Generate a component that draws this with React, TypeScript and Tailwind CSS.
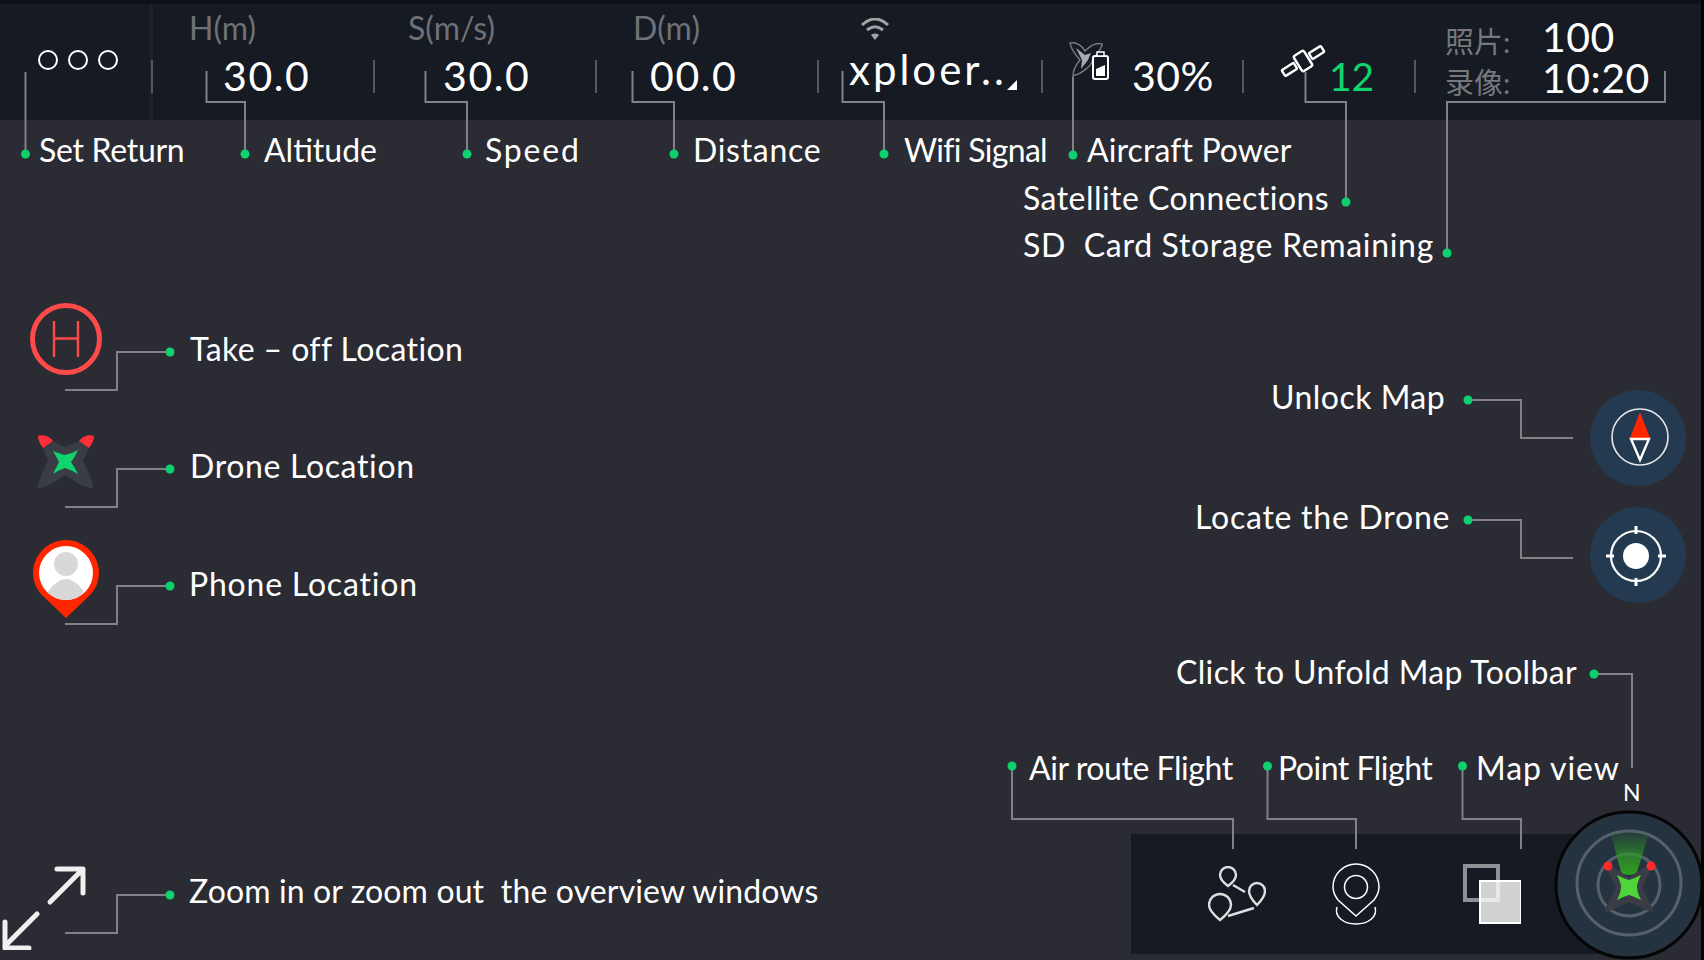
const leaders = [
  { points: '25.5,72 25.5,154', dot: [25.5, 154] },
  { points: '206.5,71 206.5,102 245,102 245,154', dot: [245, 154] },
  { points: '425.5,71 425.5,102 467,102 467,154', dot: [467, 154] },
  { points: '632.5,71 632.5,102 674,102 674,154', dot: [674, 154] },
  { points: '842.5,71 842.5,102 884,102 884,154', dot: [884, 154] },
  { points: '1073,77 1073,155', dot: [1073, 155] },
  { points: '1305.5,72 1305.5,102 1346,102 1346,202', dot: [1346, 202] },
  { points: '1665,71 1665,102 1447,102 1447,253', dot: [1447, 253] },
  { points: '65,390 117,390 117,352 170,352', dot: [170, 352] },
  { points: '65,507 117,507 117,469 170,469', dot: [170, 469] },
  { points: '65,624 117,624 117,586 170,586', dot: [170, 586] },
  { points: '65,933 117,933 117,895 170,895', dot: [170, 895] },
  { points: '1468,400 1521,400 1521,438 1573,438', dot: [1468, 400] },
  { points: '1468,520 1521,520 1521,558 1573,558', dot: [1468, 520] },
  { points: '1594,674 1632,674 1632,768', dot: [1594, 674] },
  { points: '1012,766 1012,819 1233,819 1233,849', dot: [1012, 766] },
  { points: '1267.5,766 1267.5,819 1356,819 1356,849', dot: [1267.5, 766] },
  { points: '1462.5,766 1462.5,819 1521,819 1521,849', dot: [1462.5, 766] },
];

const labels = [
  { text: 'Set Return', className: 'left-[39px] top-[135px] tracking-[-0.3px]' },
  { text: 'Altitude', className: 'left-[264px] top-[135px]' },
  { text: 'Speed', className: 'left-[485px] top-[135px] tracking-[1.8px]' },
  { text: 'Distance', className: 'left-[693px] top-[135px] tracking-[0.7px]' },
  { text: 'Wifi Signal', className: 'left-[904px] top-[135px] tracking-[-0.7px]' },
  { text: 'Aircraft Power', className: 'left-[1087px] top-[135px] tracking-[0.1px]' },
  { text: 'Satellite Connections', className: 'left-[1023px] top-[183px] tracking-[0.46px]' },
  { text: 'SD  Card Storage Remaining', className: 'left-[1023px] top-[230px] tracking-[0.68px]' },
  { text: 'Take – off Location', className: 'left-[190px] top-[334px] tracking-[0.4px]' },
  { text: 'Drone Location', className: 'left-[190px] top-[451px] tracking-[0.65px]' },
  { text: 'Phone Location', className: 'left-[189px] top-[569px] tracking-[0.8px]' },
  { text: 'Zoom in or zoom out  the overview windows', className: 'left-[189px] top-[876px] tracking-[0.13px]' },
  { text: 'Unlock Map', className: 'left-[1271px] top-[382px] tracking-[0.47px]' },
  { text: 'Locate the Drone', className: 'left-[1195px] top-[502px] tracking-[0.75px]' },
  { text: 'Click to Unfold Map Toolbar', className: 'left-[1176px] top-[657px] tracking-[0.34px]' },
  { text: 'Air route Flight', className: 'left-[1029px] top-[753px] tracking-[-0.43px]' },
  { text: 'Point Flight', className: 'left-[1278px] top-[753px] tracking-[-0.5px]' },
  { text: 'Map view', className: 'left-[1476px] top-[753px] tracking-[0.9px]' },
];

function Tick() {
  return <div className="mt-[56px] h-[33px] w-[2px] shrink-0 bg-[#55585e]" />;
}

function Stat({ label, value, labelClass, valueClass }: { label: string; value: string; labelClass: string; valueClass: string }) {
  return (
    <div className="w-[220px] shrink-0">
      <div className={`mt-[6px] text-[32px] leading-[36px] text-[#6e7176] ${labelClass}`}>{label}</div>
      <div className={`mt-[7px] text-[41px] leading-[46px] tracking-[1.6px] text-white ${valueClass}`}>{value}</div>
    </div>
  );
}

function WifiIcon() {
  return (
    <svg width="30" height="22" viewBox="0 0 30 22" fill="none">
      <path d="M2 7C10 -1 20 -1 28 7" stroke="#a3a3a3" strokeWidth="3" />
      <path d="M7 12C12 8 18 8 23 12" stroke="#a3a3a3" strokeWidth="3" />
      <path d="M11 17C13 15 17 15 19 17L15 22Z" fill="#a3a3a3" />
    </svg>
  );
}

function BatteryDrone() {
  return (
    <svg width="42" height="40" viewBox="0 0 42 40" fill="none">
      <path d="M1 1C8 0 13 4 16 9C21 4 27 0 33 2C33 7 28 12 24 17C23 24 12 32 4 34C4 26 8 22 11 18C7 13 2 8 1 1Z" stroke="#77797e" strokeWidth="1.5" />
      <path d="M7 6L16 13L22 11L19 18L12 27L13 18Z" fill="#a8a9ac" />
      <rect x="24" y="14" width="15" height="23" rx="2" fill="#151a23" stroke="#fff" strokeWidth="2" />
      <rect x="28" y="10" width="7" height="4" fill="#151a23" stroke="#fff" strokeWidth="1.5" />
      <path d="M27 34V27L36 23V34Z" fill="#fff" />
    </svg>
  );
}

function SatelliteIcon() {
  return (
    <svg width="46" height="34" viewBox="0 0 46 34" fill="none" stroke="#fff" strokeWidth="2.4">
      <g transform="rotate(-32 23 17)">
        <rect x="17" y="8" width="12" height="18" rx="2" />
        <rect x="0" y="13.5" width="14" height="7" rx="1" />
        <rect x="32" y="13.5" width="14" height="7" rx="1" />
      </g>
    </svg>
  );
}

function HelipadIcon() {
  return (
    <svg width="72" height="72" viewBox="0 0 72 72" fill="none" stroke="#ff4a4a">
      <circle cx="36" cy="36" r="33.5" strokeWidth="5" />
      <path d="M24 18V54M48 18V54M24 35.5H48" strokeWidth="2.4" />
    </svg>
  );
}

function DroneIcon() {
  return (
    <svg width="60" height="56" viewBox="0 0 60 56">
      <path d="M7 15L17 8L29 14L43 8L53 15L47 28C52 38 57 48 57 55C50 56 38 48 29 42C20 48 8 56 2 55C2 48 7 38 12 28Z" fill="#3a3c46" />
      <path d="M2 3C8 1 14 4 17 8L7 15C4 11 2 7 2 3Z" fill="#ff2f36" />
      <path d="M58 3C52 1 46 4 43 8L53 15C56 11 58 7 58 3Z" fill="#ff2f36" />
      <path d="M17 18Q25 21 29 22Q35 21 42 17Q39 24 35 29Q39 35 42 41Q35 37 29 35Q23 37 17 41Q20 35 23 29Q20 23 17 18Z" fill="#10d56f" />
    </svg>
  );
}

function PhonePin() {
  return (
    <svg width="66" height="78" viewBox="0 0 66 78">
      <defs>
        <clipPath id="pin-face">
          <circle cx="33" cy="33" r="27" />
        </clipPath>
      </defs>
      <path d="M33 0C51 0 66 15 66 33C66 42 62 50 56 56L33 78L10 56C4 50 0 42 0 33C0 15 15 0 33 0Z" fill="#ff2600" />
      <circle cx="33" cy="33" r="27" fill="#fff" />
      <circle cx="33" cy="24" r="12" fill="#d8d8d8" />
      <path d="M10 62C14 50 24 39 33 39C42 39 52 50 56 62Z" fill="#d8d8d8" clipPath="url(#pin-face)" />
    </svg>
  );
}

function ZoomArrows() {
  return (
    <svg width="84" height="84" viewBox="0 0 84 84" fill="none" stroke="#f0f0f0" strokeWidth="5" strokeLinecap="round" strokeLinejoin="round">
      <path d="M48 36L80 4M55 3H81V27" />
      <path d="M35 48L3 80M3 56V82H27" />
    </svg>
  );
}

function CompassIcon() {
  return (
    <svg width="96" height="96" viewBox="0 0 96 96" fill="none">
      <circle cx="50" cy="47" r="28" stroke="#e8e8e8" strokeWidth="1.6" />
      <path d="M50 22L60 48H40Z" fill="#ff2600" />
      <path d="M41 49H59L50 70Z" stroke="#fff" strokeWidth="2.4" />
    </svg>
  );
}

function LocateIcon() {
  return (
    <svg width="96" height="96" viewBox="0 0 96 96" fill="none" stroke="#fff">
      <circle cx="46" cy="49" r="25" strokeWidth="2.2" />
      <circle cx="46" cy="49" r="13" fill="#fff" stroke="none" />
      <path d="M46 19V27M46 71V79M16 49H24M68 49H76" strokeWidth="3" />
    </svg>
  );
}

function RouteIcon() {
  return (
    <svg width="58" height="56" viewBox="0 0 58 56" fill="none" stroke="#dedede" strokeWidth="2.4">
      <path d="M20 1a8 8 0 0 1 8 8c0 4-4 8-8 11c-4-3-8-7-8-11a8 8 0 0 1 8-8Z" />
      <path d="M12 28a11 11 0 0 1 11 11c0 6-6 11-11 15c-5-4-11-9-11-15a11 11 0 0 1 11-11Z" />
      <path d="M49 17a8 8 0 0 1 8 8c0 5-4 10-8 14c-4-4-8-9-8-14a8 8 0 0 1 8-8Z" />
      <path d="M25 19L37 26M20 50L46 42" />
    </svg>
  );
}

function PointPinIcon() {
  return (
    <svg width="48" height="62" viewBox="0 0 48 62" fill="none" stroke="#fff" strokeWidth="1.5">
      <path d="M24 53L42 37C45 33 47 29 47 24A23 23 0 0 0 1 24C1 29 3 33 6 37Z" />
      <circle cx="24" cy="24" r="11.5" />
      <path d="M5 44C2 54 12 61 24 61C36 61 46 54 43 44" />
    </svg>
  );
}

function LayersIcon() {
  return (
    <svg width="58" height="60" viewBox="0 0 58 60" fill="none">
      <rect x="2" y="2" width="33" height="34" stroke="#8f9094" strokeWidth="4" />
      <rect x="17" y="17" width="41" height="42" fill="#fff" fillOpacity="0.8" stroke="#fff" strokeWidth="2" />
    </svg>
  );
}

function MiniMap() {
  return (
    <svg width="150" height="150" viewBox="0 0 150 150" fill="none">
      <defs>
        <linearGradient id="cone" x1="0" y1="0" x2="0" y2="1">
          <stop offset="0" stopColor="#2fa020" stopOpacity="0" />
          <stop offset="0.6" stopColor="#2fa020" stopOpacity="0.7" />
          <stop offset="1" stopColor="#2fa020" />
        </linearGradient>
      </defs>
      <circle cx="75" cy="75" r="73" fill="#253341" stroke="#050505" strokeWidth="3" />
      <circle cx="75" cy="73" r="52" stroke="#56616c" strokeWidth="3" />
      <circle cx="75" cy="75" r="31" stroke="#56616c" strokeWidth="3" />
      <path d="M56 20H96L83 62C80 66 70 66 67 62Z" fill="url(#cone)" />
      <path d="M54 56L75 70L96 56L86 78L97 100L75 90L53 100L64 78Z" fill="#3a3c46" stroke="#3a3c46" strokeWidth="4" strokeLinejoin="round" />
      <circle cx="54" cy="56" r="4.5" fill="#ff2a2a" />
      <circle cx="97" cy="56" r="4.5" fill="#ff2a2a" />
      <path d="M63 65Q71 69 75 70Q79 69 87 65Q83 73 83 77Q83 82 87 90Q79 86 75 85Q71 86 63 90Q67 82 67 77Q67 73 63 65Z" fill="#4fd53a" />
    </svg>
  );
}

export default function App() {
  return (
    <div className="relative h-[960px] w-[1704px] overflow-hidden bg-black font-[family-name:Lato,'Noto_Sans_CJK_SC',sans-serif]">
      <div className="flex h-full w-[1701px] flex-col bg-[#2a2b33]">
        <header className="flex h-[120px] shrink-0 border-t-[4px] border-[#0d1119] bg-[#151a23]">
          <div className="relative flex w-[153px] shrink-0 justify-center gap-[10px] border-r-[3px] border-[#1f2229] pt-[46px] pl-[6px]">
            <span className="h-[20px] w-[20px] rounded-full border-[2.5px] border-white" />
            <span className="h-[20px] w-[20px] rounded-full border-[2.5px] border-white" />
            <span className="h-[20px] w-[20px] rounded-full border-[2.5px] border-white" />
            <span className="absolute top-[56px] right-[-2.5px] h-[33px] w-[2px] bg-[#55585e]" />
          </div>
          <Stat label="H(m)" value="30.0" labelClass="pl-[36px]" valueClass="pl-[70px]" />
          <Tick />
          <Stat label="S(m/s)" value="30.0" labelClass="pl-[33px]" valueClass="pl-[68px]" />
          <Tick />
          <Stat label="D(m)" value="00.0" labelClass="pl-[36px]" valueClass="pl-[53px]" />
          <Tick />
          <div className="relative w-[222px] shrink-0">
            <div className="mt-[14px] ml-[41px]">
              <WifiIcon />
            </div>
            <div className="mt-[6px] ml-[30px] text-[42px] leading-[46px] tracking-[3px] text-white">xploer..</div>
            <span className="absolute top-[76px] left-[188px] h-0 w-0 border-b-[10px] border-l-[10px] border-b-white border-l-transparent" />
          </div>
          <Tick />
          <div className="flex w-[199px] shrink-0">
            <div className="mt-[38px] ml-[26px]">
              <BatteryDrone />
            </div>
            <div className="mt-[49px] ml-[21px] text-[41px] leading-[46px] tracking-[0.5px] text-white">30%</div>
          </div>
          <Tick />
          <div className="flex w-[170px] shrink-0">
            <div className="mt-[40px] ml-[36px]">
              <SatelliteIcon />
            </div>
            <div className="mt-[49px] ml-[3px] text-[39px] leading-[46px] text-[#10d56f]">12</div>
          </div>
          <Tick />
          <div className="grid flex-1 grid-cols-[97px_1fr] content-start pt-[12px] pl-[29px] text-[#75787c]">
            <div className="self-end text-[29px] leading-[30px]">照片:</div>
            <div className="text-[41px] leading-[41px] tracking-[0.5px] text-white">100</div>
            <div className="self-end text-[29px] leading-[30px]">录像:</div>
            <div className="text-[41px] leading-[41px] tracking-[0.5px] text-white">10:20</div>
          </div>
        </header>

        <main className="flex flex-1">
          <div className="flex w-[120px] shrink-0 flex-col">
            <div className="mt-[183px] ml-[30px]">
              <HelipadIcon />
            </div>
            <div className="mt-[58px] ml-[36px]">
              <DroneIcon />
            </div>
            <div className="mt-[51px] ml-[33px]">
              <PhonePin />
            </div>
            <div className="mt-auto mb-[10px] ml-[2px]">
              <ZoomArrows />
            </div>
          </div>
          <div className="flex flex-1 flex-col items-end">
            <div className="mt-[270px] mr-[15px] flex h-[96px] w-[96px] rounded-full bg-[#243a50]">
              <CompassIcon />
            </div>
            <div className="mt-[21px] mr-[15px] flex h-[96px] w-[96px] rounded-full bg-[#243a50]">
              <LocateIcon />
            </div>
            <div className="mt-auto mr-[100px] mb-[6px] flex h-[120px] w-[470px] items-center bg-[#151a23] pl-[77px]">
              <RouteIcon />
              <div className="ml-[66px]">
                <PointPinIcon />
              </div>
              <div className="ml-[83px]">
                <LayersIcon />
              </div>
            </div>
          </div>
        </main>
      </div>

      {/* callouts sit on top of the mock UI */}
      <svg className="pointer-events-none absolute top-0 left-0" width="1704" height="960" fill="none">
        {leaders.map((l) => (
          <g key={l.points}>
            <polyline points={l.points} stroke="#808285" strokeWidth="2" />
            <circle cx={l.dot[0]} cy={l.dot[1]} r="4.5" fill="#0fd06f" />
          </g>
        ))}
      </svg>
      {labels.map((l) => (
        <span key={l.text} className={`absolute whitespace-pre text-[32px] leading-[30px] text-white ${l.className}`}>
          {l.text}
        </span>
      ))}
      <span className="absolute top-[781px] left-[1623px] text-[23px] leading-[23px] text-white">N</span>
      <div className="absolute top-[810px] left-[1554px]">
        <MiniMap />
      </div>
    </div>
  );
}
